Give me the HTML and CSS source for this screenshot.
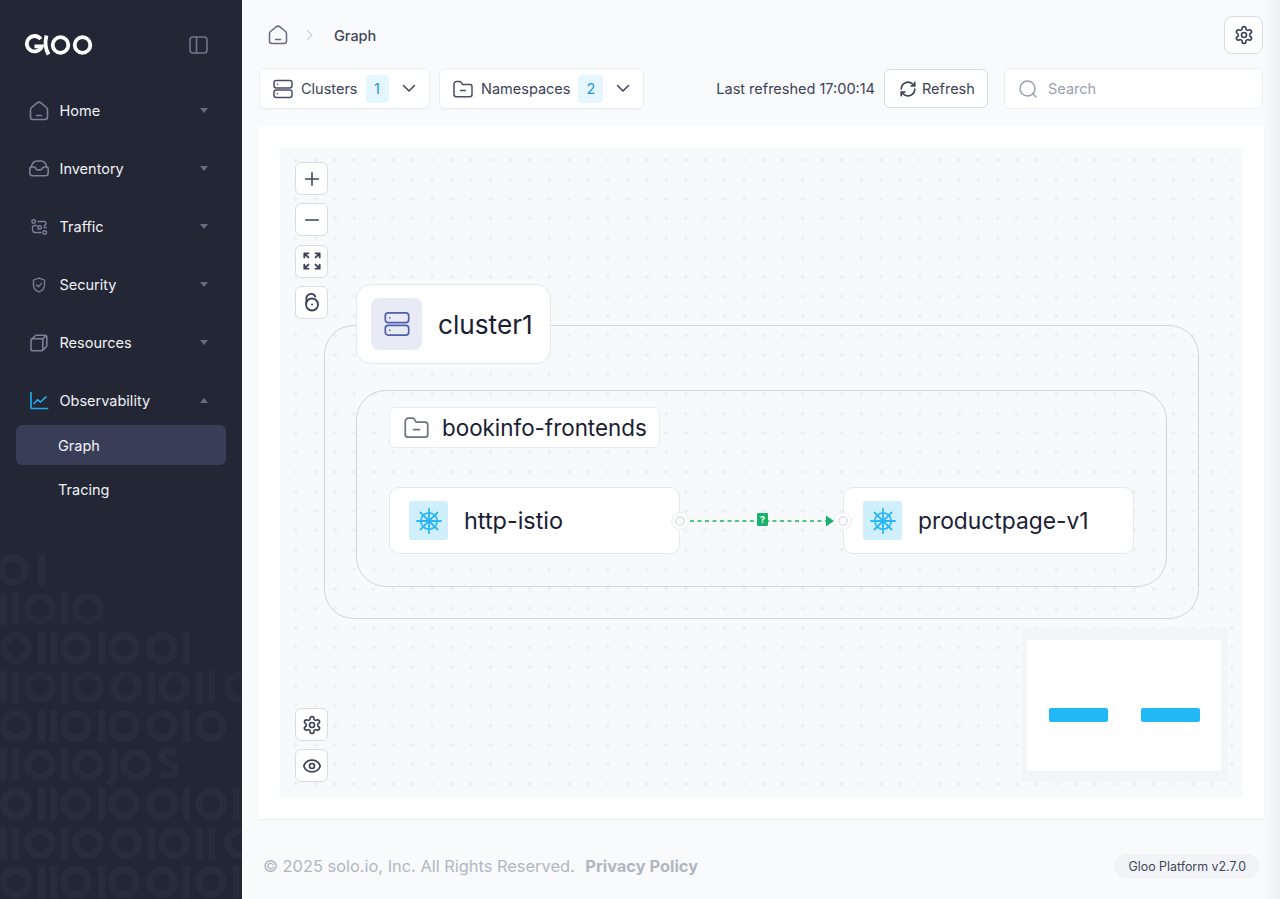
FILE: index.html
```html
<!DOCTYPE html>
<html lang="en">
<head>
    <meta charset="UTF-8">
    <meta name="viewport" content="width=device-width, initial-scale=1.0">
    <title>Graph</title>
    <link rel="stylesheet" href="styles.css">
</head>
<body>
    <svg class="icon-defs" width="0" height="0">
        <symbol id="i-home" viewBox="0 0 20 20">
            <path d="M1.500 16V8.700c0-.9.400-1.600 1-2.200l5.600-4.600c1.100-.9 2.700-.9 3.800 0l5.600 4.600c.6.600 1 1.300 1 2.200V16c0 1.400-1.100 2.500-2.500 2.500H4c-1.400 0-2.500-1.100-2.500-2.500z"/>
            <path d="M7.500 14.500h5"/>
        </symbol>
        <symbol id="i-gear" viewBox="0 0 24 24">
            <path d="M12.220 2h-.44a2 2 0 0 0-2 2v.18a2 2 0 0 1-1 1.730l-.43.25a2 2 0 0 1-2 0l-.15-.08a2 2 0 0 0-2.730.73l-.22.38a2 2 0 0 0 .73 2.730l.15.1a2 2 0 0 1 1 1.720v.51a2 2 0 0 1-1 1.740l-.15.09a2 2 0 0 0-.73 2.730l.22.38a2 2 0 0 0 2.730.73l.15-.08a2 2 0 0 1 2 0l.43.25a2 2 0 0 1 1 1.730V20a2 2 0 0 0 2 2h.44a2 2 0 0 0 2-2v-.18a2 2 0 0 1 1-1.730l.43-.25a2 2 0 0 1 2 0l.15.08a2 2 0 0 0 2.730-.73l.22-.39a2 2 0 0 0-.73-2.730l-.15-.08a2 2 0 0 1-1-1.740v-.5a2 2 0 0 1 1-1.740l.15-.09a2 2 0 0 0 .73-2.730l-.22-.38a2 2 0 0 0-2.730-.73l-.15.08a2 2 0 0 1-2 0l-.43-.25a2 2 0 0 1-1-1.730V4a2 2 0 0 0-2-2z"/>
            <circle cx="12" cy="12" r="3"/>
        </symbol>
        <symbol id="i-server" viewBox="0 0 20 20">
            <rect x="1" y="1.500" width="18" height="7.500" rx="2.200"/>
            <rect x="1" y="11" width="18" height="7.500" rx="2.200"/>
            <path d="M4.400 5.200h.1M4.400 14.800h.1"/>
        </symbol>
        <symbol id="i-folder" viewBox="0 0 20 20">
            <path d="M1 5.200V15.600c0 1.200.9 2.100 2.100 2.100h13.800c1.200 0 2.100-.9 2.100-2.100V7.700c0-1.200-.9-2.100-2.100-2.100H9.700L8.200 3.300C7.900 2.800 7.400 2.500 6.800 2.500H3.700C2.200 2.500 1 3.700 1 5.200z"/>
            <path d="M7.600 11.600h4.800"/>
        </symbol>
        <symbol id="i-helm" viewBox="0 0 26 26">
            <circle cx="13" cy="13" r="8.200" fill="none"/>
            <circle cx="13" cy="13" r="2.200" class="helm-hub"/>
            <path d="M13 1v24M1 13h24M4.500 4.500l17 17M21.500 4.500l-17 17"/>
        </symbol>
    </svg>

    <aside class="sidebar">
        <svg class="binary-bg" width="242" height="345" viewBox="0 0 242 345">
            <defs>
                <g id="row-a">
                    <circle cx="16" cy="0" r="12.200"/><path d="M41.500-16V16M53.500-16V16"/>
                    <circle cx="76" cy="0" r="12.200"/><path d="M101.500-16V16"/>
                    <circle cx="124" cy="0" r="12.200"/><circle cx="162" cy="0" r="12.200"/><path d="M186.500-16V16"/>
                    <circle cx="211" cy="0" r="12.200"/><path d="M236.500-16V16"/>
                </g>
                <g id="row-b">
                    <path d="M3-16V16M15.500-16V16"/><circle cx="40" cy="0" r="12.200"/>
                    <path d="M64.500-16V16"/><circle cx="88" cy="0" r="12.200"/>
                    <circle cx="126" cy="0" r="12.200"/><path d="M151.500-16V16"/>
                    <circle cx="174" cy="0" r="12.200"/><path d="M199.500-16V16M211.500-16V16"/>
                    <circle cx="240" cy="0" r="12.200"/>
                </g>
            </defs>
            <circle cx="13" cy="16" r="12.200"/>
            <path d="M41.500 0V32"/>
            <g transform="translate(0 55)">
                <path d="M3-16V16M15.500-16V16"/><circle cx="40" cy="0" r="12.200"/>
                <path d="M64.500-16V16"/><circle cx="88" cy="0" r="12.200"/>
            </g>
            <g transform="translate(0 94)">
                <circle cx="16" cy="0" r="12.200"/><path d="M41.500-16V16M53.500-16V16"/>
                <circle cx="76" cy="0" r="12.200"/><path d="M101.500-16V16"/>
                <circle cx="124" cy="0" r="12.200"/><circle cx="162" cy="0" r="12.200"/><path d="M186.500-16V16"/>
            </g>
            <use href="#row-b" y="133"/>
            <g transform="translate(0 172)">
                <circle cx="16" cy="0" r="12.200"/><path d="M41.500-16V16M53.500-16V16"/>
                <circle cx="76" cy="0" r="12.200"/><path d="M101.500-16V16"/>
                <circle cx="124" cy="0" r="12.200"/><circle cx="162" cy="0" r="12.200"/><path d="M186.500-16V16"/>
                <circle cx="211" cy="0" r="12.200"/>
            </g>
            <g transform="translate(0 211)">
                <path d="M3-16V16M15.500-16V16"/><circle cx="40" cy="0" r="12.200"/>
                <path d="M64.500-16V16"/><circle cx="88" cy="0" r="12.200"/>
                <path d="M114-16V8q0 6-6 12"/><circle cx="136" cy="0" r="12.200"/>
                <path d="M177-12q-12-4-15 1t6 9q9 3 7 8t-14 3"/>
            </g>
            <use href="#row-a" y="250"/>
            <use href="#row-b" y="289"/>
            <use href="#row-a" y="328"/>
        </svg>

        <div class="sidebar-top">
            <svg class="logo" width="70" height="22" viewBox="0 0 70 22">
                <path d="M16.800 5.200A7.700 7.700 0 1 0 17.800 12.300H10.500"/>
                <path d="M22.500 1.500C21 7 21 14 24.500 20.500"/>
                <circle cx="36.500" cy="11" r="7.800"/>
                <circle cx="58.500" cy="11" r="7.800"/>
            </svg>
            <svg class="collapse-icon" width="19" height="18" viewBox="0 0 19 18">
                <rect x="1" y="1" width="17" height="16" rx="3"/>
                <path d="M7.500 1v16"/>
            </svg>
        </div>

        <nav class="nav">
            <a class="nav-item">
                <svg class="nav-icon" viewBox="0 0 20 20"><use href="#i-home"/></svg>
                <span class="nav-label">Home</span><i class="caret"></i>
            </a>
            <a class="nav-item">
                <svg class="nav-icon" viewBox="0 0 20 20">
                    <path d="M2 8.500C3 4.500 5 2 8 2h4c3 0 5 2.500 6 6.500"/>
                    <path d="M.8 9.800V14c0 1.500 1.200 2.700 2.700 2.700h13c1.500 0 2.700-1.200 2.700-2.700V9.800c0-1-.8-1.800-1.800-1.800h-2.100c-.8 0-1.400.4-1.800 1l-.5.9c-.3.600-1 1-1.700 1H8.700c-.7 0-1.400-.4-1.700-1L6.500 9c-.4-.6-1-1-1.800-1H2.600C1.600 8 .8 8.800.8 9.800z"/>
                </svg>
                <span class="nav-label">Inventory</span><i class="caret"></i>
            </a>
            <a class="nav-item">
                <svg class="nav-icon nav-icon-thin" viewBox="0 0 20 20">
                    <rect x="3" y="3" width="3.400" height="3" rx=".8"/>
                    <rect x="8.800" y="9" width="3.400" height="3" rx=".8"/>
                    <rect x="14" y="14" width="3.400" height="3" rx=".8"/>
                    <path d="M9 4.500h6c1.500 0 2 1 2 2s-.5 2-2 2M3.500 10.500c0-1 .7-2 2-2h2M14.800 10.500h2.500M3.500 10.500v2c0 2 1 3 2.500 3h6"/>
                </svg>
                <span class="nav-label">Traffic</span><i class="caret"></i>
            </a>
            <a class="nav-item">
                <svg class="nav-icon nav-icon-thin" viewBox="0 0 20 20">
                    <path d="M10 3.200 15.500 5v5c0 3.500-2.500 5.800-5.500 7-3-1.200-5.500-3.500-5.500-7V5z"/>
                    <path d="M7.500 10l1.800 1.800 3.300-3.400"/>
                </svg>
                <span class="nav-label">Security</span><i class="caret"></i>
            </a>
            <a class="nav-item">
                <svg class="nav-icon" viewBox="0 0 20 20">
                    <path d="M2 7.500V16c0 1 .8 1.800 1.800 1.800H12c1 0 1.800-.8 1.800-1.800V7.500C13.800 6.500 13 5.700 12 5.700H3.800C2.800 5.700 2 6.500 2 7.500z"/>
                    <path d="M2.500 6.300l3.700-3.500c.4-.4.9-.6 1.400-.6H16c1 0 1.800.8 1.800 1.800v8.500c0 .5-.2 1-.6 1.400l-3.700 3.400M13.300 6.200l4-3.500"/>
                </svg>
                <span class="nav-label">Resources</span><i class="caret"></i>
            </a>
            <a class="nav-item">
                <svg class="nav-icon nav-icon-active" viewBox="0 0 20 20">
                    <path d="M2 1.500V16.500c0 .6.400 1 1 1h15.500"/>
                    <path d="M5 12.500l3.500-3.700 3 2.200 5.500-5.200"/>
                </svg>
                <span class="nav-label">Observability</span><i class="caret caret-up"></i>
            </a>
            <a class="nav-sub nav-sub-active">Graph</a>
            <a class="nav-sub">Tracing</a>
        </nav>
    </aside>

    <main class="main">
        <div class="topbar">
            <div class="breadcrumb">
                <svg class="crumb-home" viewBox="0 0 20 20"><use href="#i-home"/></svg>
                <svg class="crumb-sep" width="8" height="12" viewBox="0 0 8 12"><path d="M1.500 1.500 6 6l-4.500 4.500"/></svg>
                <span class="crumb-text">Graph</span>
            </div>
            <button class="icon-btn settings-btn"><svg class="btn-icon" viewBox="0 0 24 24"><use href="#i-gear"/></svg></button>
        </div>

        <div class="filters">
            <div class="dropdown dropdown-clusters">
                <svg class="dd-icon" viewBox="0 0 20 20"><use href="#i-server"/></svg>
                <span>Clusters</span>
                <span class="count">1</span>
                <svg class="dd-chevron" width="14" height="9" viewBox="0 0 14 9"><path d="M1.500 1.500 7 7l5.500-5.500"/></svg>
            </div>
            <div class="dropdown dropdown-ns">
                <svg class="dd-icon" viewBox="0 0 20 20"><use href="#i-folder"/></svg>
                <span>Namespaces</span>
                <span class="count">2</span>
                <svg class="dd-chevron" width="14" height="9" viewBox="0 0 14 9"><path d="M1.500 1.500 7 7l5.500-5.500"/></svg>
            </div>
            <span class="last-refreshed">Last refreshed 17:00:14</span>
            <button class="refresh-btn">
                <svg class="refresh-icon" viewBox="0 0 24 24">
                    <path d="M3 12a9 9 0 0 1 15-6.700L21 8M21 3v5h-5M21 12a9 9 0 0 1-15 6.700L3 16M8 16H3v5"/>
                </svg>
                Refresh
            </button>
            <div class="search">
                <svg class="search-icon" viewBox="0 0 20 20"><circle cx="9.500" cy="9.500" r="7.500"/><path d="m15 15 3 3"/></svg>
                <span>Search</span>
            </div>
        </div>

        <section class="graph-card">
            <div class="canvas">
                <div class="controls controls-top">
                    <button class="icon-btn ctl-btn">
                        <svg class="ctl-icon" viewBox="0 0 20 20"><path d="M10 3v14M3 10h14"/></svg>
                    </button>
                    <button class="icon-btn ctl-btn">
                        <svg class="ctl-icon" viewBox="0 0 20 20"><path d="M3 10h14"/></svg>
                    </button>
                    <button class="icon-btn ctl-btn">
                        <svg class="ctl-icon ctl-icon-bold" viewBox="0 0 20 20">
                            <path d="M1.500 6V1.500H6M2 2l4 4M18.500 6V1.500H14M18 2l-4 4M1.500 14v4.500H6M2 18l4-4M18.500 14v4.500H14M18 18l-4-4"/>
                        </svg>
                    </button>
                    <button class="icon-btn ctl-btn">
                        <svg class="ctl-icon ctl-icon-lock" viewBox="0 0 20 20">
                            <circle cx="10" cy="12.500" r="6"/>
                            <path d="M4.400 10.500V6.500a4.700 4.700 0 0 1 8.900-2"/>
                            <path d="M10 12.500h.1"/>
                        </svg>
                    </button>
                </div>
                <div class="controls controls-bottom">
                    <button class="icon-btn ctl-btn"><svg class="ctl-icon ctl-icon-lg" viewBox="0 0 24 24"><use href="#i-gear"/></svg></button>
                    <button class="icon-btn ctl-btn">
                        <svg class="ctl-icon ctl-icon-lg" viewBox="0 0 24 24">
                            <path d="M2.100 12a10.500 10.500 0 0 1 19.800 0 10.500 10.500 0 0 1-19.800 0z"/>
                            <circle cx="12" cy="12" r="3"/>
                        </svg>
                    </button>
                </div>

                <div class="group group-cluster"></div>
                <div class="cluster-label">
                    <span class="cluster-icon"><svg viewBox="0 0 20 20"><use href="#i-server"/></svg></span>
                    <span>cluster1</span>
                </div>

                <div class="group group-ns"></div>
                <div class="ns-label">
                    <svg class="ns-icon" viewBox="0 0 20 20"><use href="#i-folder"/></svg>
                    <span>bookinfo-frontends</span>
                </div>

                <div class="node node-left">
                    <span class="node-icon"><svg viewBox="0 0 26 26"><use href="#i-helm"/></svg></span>
                    <span>http-istio</span>
                </div>
                <div class="node node-right">
                    <span class="node-icon"><svg viewBox="0 0 26 26"><use href="#i-helm"/></svg></span>
                    <span>productpage-v1</span>
                </div>

                <i class="handle handle-left"></i>
                <i class="handle handle-right"></i>

                <svg class="edge" width="146" height="14" viewBox="0 0 146 14">
                    <path d="M0 7H137"/>
                    <polygon points="136,1.500 144,7 136,12.500"/>
                </svg>
                <span class="edge-label">?</span>

                <div class="minimap">
                    <div class="minimap-view">
                        <i class="mini-node"></i>
                        <i class="mini-node"></i>
                    </div>
                </div>
            </div>
        </section>

        <footer class="footer">
            <p class="copyright">© 2025 solo.io, Inc. All Rights Reserved. <b>Privacy Policy</b></p>
            <span class="version">Gloo Platform v2.7.0</span>
        </footer>
    </main>
</body>
</html>
```

FILE: styles.css
```css
* {
    box-sizing: border-box;
}

html, body {
    margin: 0;
    height: 100%;
}

body {
    display: flex;
    height: 100vh;
    overflow: hidden;
    background-color: #f9fafc;
    font-family: Inter, "Noto Sans", sans-serif;
    font-size: 14.5px;
    color: #3b4257;
}

svg {
    display: block;
    fill: none;
    stroke: currentColor;
    stroke-linecap: round;
    stroke-linejoin: round;
}

button {
    font-family: inherit;
    cursor: pointer;
}

.icon-defs {
    position: absolute;
}

/* Sidebar */
.sidebar {
    position: relative;
    flex: 0 0 242px;
    background-color: #232735;
    overflow: hidden;
}

.binary-bg {
    position: absolute;
    left: 0;
    bottom: 0;
    stroke: #292d3b;
    stroke-width: 7.5px;
    stroke-linecap: butt;
}

.sidebar-top {
    position: relative;
    display: flex;
    align-items: center;
    justify-content: space-between;
    height: 87px;
    padding: 2px 34px 0 24px;
}

.logo {
    stroke: #fff;
    stroke-width: 3.8px;
    stroke-linecap: butt;
    stroke-linejoin: miter;
}

.collapse-icon {
    color: #6f768b;
    stroke-width: 1.6px;
}

.nav {
    position: relative;
    display: flex;
    flex-direction: column;
}

.nav-item {
    display: flex;
    align-items: center;
    height: 48px;
    margin-bottom: 10px;
    padding: 0 34px 0 29px;
    color: #f1f2f6;
}

.nav-item:nth-child(6) {
    margin-bottom: 0;
}

.nav-icon {
    width: 20px;
    height: 20px;
    margin-right: 10.500px;
    color: #7a8196;
    stroke-width: 1.6px;
}

.nav-icon-thin {
    stroke-width: 1.3px;
}

.nav-icon-active {
    color: #1fa9e6;
    stroke-width: 1.7px;
}

.nav-label {
    flex: 1;
    padding-bottom: 2px;
}

.caret {
    width: 0;
    height: 0;
    margin-bottom: 1px;
    border-left: 4.500px solid transparent;
    border-right: 4.500px solid transparent;
    border-top: 5px solid #666c82;
}

.caret-up {
    border-top: 0;
    border-bottom: 5px solid #666c82;
}

.nav-sub {
    display: flex;
    align-items: center;
    height: 40px;
    margin: 0 16px 4px;
    padding-left: 42px;
    border-radius: 6px;
    color: #f1f2f6;
}

.nav-sub-active {
    background-color: #393e58;
}

/* Main column */
.main {
    flex: 1;
    display: flex;
    flex-direction: column;
    min-width: 0;
    padding: 16px 16px 0 17px;
    background: linear-gradient(to right, #f9fafc, #eceef1) right top / 16px 100% no-repeat;
}

.topbar {
    display: flex;
    align-items: center;
    justify-content: space-between;
    height: 38px;
}

.breadcrumb {
    display: flex;
    align-items: center;
    padding-left: 9px;
}

.crumb-home {
    width: 20px;
    height: 20px;
    color: #656c82;
    stroke-width: 1.500px;
}

.crumb-sep {
    margin: 0 20px 0 18px;
    color: #d5d8e0;
    stroke-width: 1.500px;
}

.crumb-text {
    font-weight: 500;
    color: #3f4659;
}

.icon-btn {
    display: flex;
    align-items: center;
    justify-content: center;
    padding: 0;
    background-color: #fff;
    border: 1px solid #d9dce5;
    border-radius: 6px;
}

.settings-btn {
    width: 39px;
    height: 38px;
    margin-right: 1px;
    border-radius: 8px;
}

.btn-icon {
    width: 20px;
    height: 20px;
    color: #3b4257;
    stroke-width: 2px;
}

.filters {
    display: flex;
    align-items: center;
    height: 41px;
    margin-top: 14px;
}

.dropdown {
    display: flex;
    align-items: center;
    height: 41px;
    background-color: #fff;
    border: 1px solid #eceef3;
    border-radius: 6px;
    box-shadow: 0 1px 1px rgba(30, 40, 70, 0.03);
}

.dropdown-clusters {
    width: 171px;
    margin-right: 9px;
    padding-left: 13px;
}

.dropdown-ns {
    width: 205px;
    padding-left: 13px;
}

.dd-icon {
    width: 20px;
    height: 20px;
    margin-right: 8px;
    color: #474e66;
    stroke-width: 1.500px;
}

.count {
    display: flex;
    align-items: center;
    justify-content: center;
    width: 23px;
    height: 28px;
    margin-left: 8px;
    border-radius: 4px;
    background-color: #e6f6fe;
    color: #1b94d6;
}

.dropdown-ns .count {
    width: 25px;
}

.dd-chevron {
    margin-left: 13px;
    color: #3b4257;
    stroke-width: 1.500px;
}

.last-refreshed {
    margin-left: auto;
    margin-right: 9px;
}

.refresh-btn {
    display: flex;
    align-items: center;
    gap: 5px;
    width: 104px;
    height: 39px;
    margin-right: 16px;
    padding: 0 0 0 14px;
    background-color: #fff;
    border: 1px solid #d9dce5;
    border-radius: 6px;
    font-size: 14.500px;
    color: #3b4257;
}

.refresh-icon {
    width: 18px;
    height: 18px;
    color: #3b4257;
    stroke-width: 2.200px;
}

.search {
    display: flex;
    align-items: center;
    gap: 10px;
    width: 259px;
    height: 41px;
    margin-right: 1px;
    padding-left: 13px;
    background-color: #fff;
    border: 1px solid #eceef3;
    border-radius: 6px;
    color: #9aa0b0;
}

.search-icon {
    width: 20px;
    height: 20px;
    color: #9aa0b0;
    stroke-width: 1.500px;
}

/* Graph */
.graph-card {
    height: 693px;
    margin-top: 17px;
    padding: 22px 21px;
    background-color: #fff;
    box-shadow: 0 1px 1px rgba(30, 40, 70, 0.06);
}

.canvas {
    position: relative;
    height: 100%;
    background-color: #f8f9fb;
    background-image: radial-gradient(circle, #eceef3 1.500px, transparent 1.700px);
    background-size: 19.500px 19.500px;
    background-position: 6px 2.250px;
}

.controls {
    position: absolute;
    left: 15px;
    display: flex;
    flex-direction: column;
    gap: 8.300px;
}

.controls-top {
    top: 14px;
}

.controls-bottom {
    top: 560px;
}

.ctl-btn {
    width: 33px;
    height: 33px;
}

.ctl-icon {
    width: 18px;
    height: 18px;
    color: #3b4257;
    stroke-width: 1.700px;
}

.ctl-icon-bold {
    stroke-width: 2.100px;
}

.ctl-icon-lock {
    width: 20px;
    height: 20px;
    stroke-width: 1.800px;
}

.ctl-icon-lg {
    width: 20px;
    height: 20px;
    stroke-width: 2px;
}

.group {
    position: absolute;
    border: 1.500px solid #d0d3da;
    border-radius: 30px;
}

.group-cluster {
    left: 44px;
    top: 177px;
    width: 875px;
    height: 294px;
}

.group-ns {
    left: 76px;
    top: 242px;
    width: 811px;
    height: 197px;
}

.cluster-label {
    position: absolute;
    left: 76px;
    top: 136px;
    display: flex;
    align-items: center;
    gap: 16px;
    width: 195px;
    height: 80px;
    padding-left: 14px;
    background-color: #fff;
    border: 1px solid #e6e8ef;
    border-radius: 15px;
    font-size: 26.200px;
    color: #1a2033;
}

.cluster-icon {
    display: flex;
    align-items: center;
    justify-content: center;
    width: 51px;
    height: 52px;
    border-radius: 8px;
    background-color: #e8ebf5;
}

.cluster-icon svg {
    width: 26px;
    height: 26px;
    color: #4f5fae;
    stroke-width: 1.300px;
}

.ns-label {
    position: absolute;
    left: 109px;
    top: 259px;
    display: flex;
    align-items: center;
    gap: 13px;
    width: 271px;
    height: 41px;
    padding-left: 14px;
    background-color: #fff;
    border: 1px solid #e9ebf0;
    border-radius: 6px;
    font-size: 22.400px;
    white-space: nowrap;
    color: #1a2033;
}

.ns-icon {
    width: 25px;
    height: 25px;
    color: #6c7387;
    stroke-width: 1.400px;
}

.node {
    position: absolute;
    top: 339px;
    display: flex;
    align-items: center;
    gap: 16px;
    width: 291px;
    height: 67px;
    padding-left: 19px;
    background-color: #fff;
    border: 1px solid #e6e8ef;
    border-radius: 10px;
    color: #1a2033;
}

.node-left {
    left: 109px;
    font-size: 23.400px;
}

.node-right {
    left: 563px;
    font-size: 22.800px;
}

.node-icon {
    display: flex;
    align-items: center;
    justify-content: center;
    width: 39px;
    height: 39px;
    border-radius: 3px;
    background-color: #d0effd;
}

.node-icon svg {
    width: 26px;
    height: 26px;
    color: #2bb6f6;
    stroke-width: 1.800px;
}

.helm-hub {
    fill: #2bb6f6;
    stroke: none;
}

.handle {
    position: absolute;
    top: 364px;
    width: 18px;
    height: 18px;
    background-color: #f9fafc;
    border: 1px solid #eef0f4;
    border-radius: 50%;
    box-shadow: inset 0 0 0 3px #fff, inset 0 0 0 4.500px #dfe1e7;
}

.handle-left {
    left: 391px;
}

.handle-right {
    left: 554px;
}

.edge {
    position: absolute;
    left: 410px;
    top: 366px;
    color: #1ab26b;
    stroke-width: 1.700px;
    stroke-linecap: butt;
    stroke-dasharray: 4 3.500;
}

.edge polygon {
    fill: #1ab26b;
    stroke: none;
}

.edge-label {
    position: absolute;
    left: 477px;
    top: 365px;
    width: 11px;
    height: 13px;
    background-color: #1ab26b;
    border-radius: 1px;
    color: #fff;
    font-size: 9px;
    font-weight: 700;
    line-height: 13px;
    text-align: center;
}

.minimap {
    position: absolute;
    left: 742px;
    top: 480px;
    width: 206px;
    height: 154px;
    padding: 12px 7px 11px 5px;
    background-color: #f4f5f6;
}

.minimap-view {
    display: flex;
    align-items: center;
    justify-content: center;
    gap: 33px;
    height: 100%;
    padding-top: 19px;
    background-color: #fff;
}

.mini-node {
    width: 59px;
    height: 14px;
    border-radius: 2px;
    background-color: #22b8f5;
}

/* Footer */
.footer {
    flex: 1;
    display: flex;
    align-items: center;
    justify-content: space-between;
    padding: 14px 5px 0 4px;
}

.copyright {
    margin: 0;
    font-size: 16.400px;
    color: #b1b6c2;
}

.copyright b {
    margin-left: 6px;
    font-weight: 700;
}

.version {
    display: flex;
    align-items: center;
    height: 24px;
    padding: 0 12px;
    background-color: #f3f4f8;
    border: 1px solid #eceef3;
    border-radius: 12px;
    font-size: 12.400px;
    color: #3f4659;
}
```
